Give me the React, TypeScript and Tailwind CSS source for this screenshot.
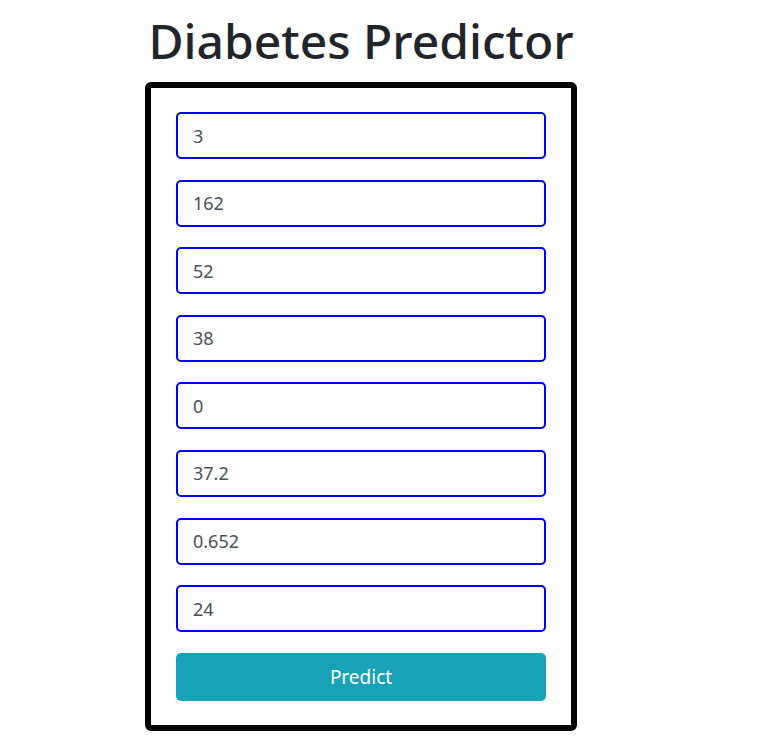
import React, { useState } from 'react';

const initialValues = ['3', '162', '52', '38', '0', '37.2', '0.652', '24'];

const App: React.FC = () => {
  const [values, setValues] = useState(initialValues);

  const handleChange = (index: number, value: string) => {
    const next = [...values];
    next[index] = value;
    setValues(next);
  };

  return (
    <div className="min-h-[745px] bg-white font-['Noto_Sans',sans-serif]">
      <div className="w-[432px] ml-[145px] pt-[12px]">
        <h1 className="text-center text-[48px] leading-[58px] font-medium text-[#212529] mb-[12px]">
          Diabetes Predictor
        </h1>

        {/* Form card */}
        <div className="border-[6px] border-black rounded-[6px] px-[25px] py-[24px]">
          <form
            className="flex flex-col gap-[20.6px]"
            onSubmit={(e) => e.preventDefault()}
          >
            {values.map((value, i) => (
              <input
                key={i}
                type="text"
                value={value}
                onChange={(e) => handleChange(i, e.target.value)}
                className="w-full h-[47px] border-2 border-[#0000ff] rounded-[5px] px-[15px] text-[18px] text-[#495057] bg-white outline-none"
              />
            ))}
            <button
              type="submit"
              className="w-full h-[48px] bg-[#17a2b8] text-white text-[19px] rounded-[5px]"
            >
              Predict
            </button>
          </form>
        </div>
      </div>
    </div>
  );
};

export default App;
